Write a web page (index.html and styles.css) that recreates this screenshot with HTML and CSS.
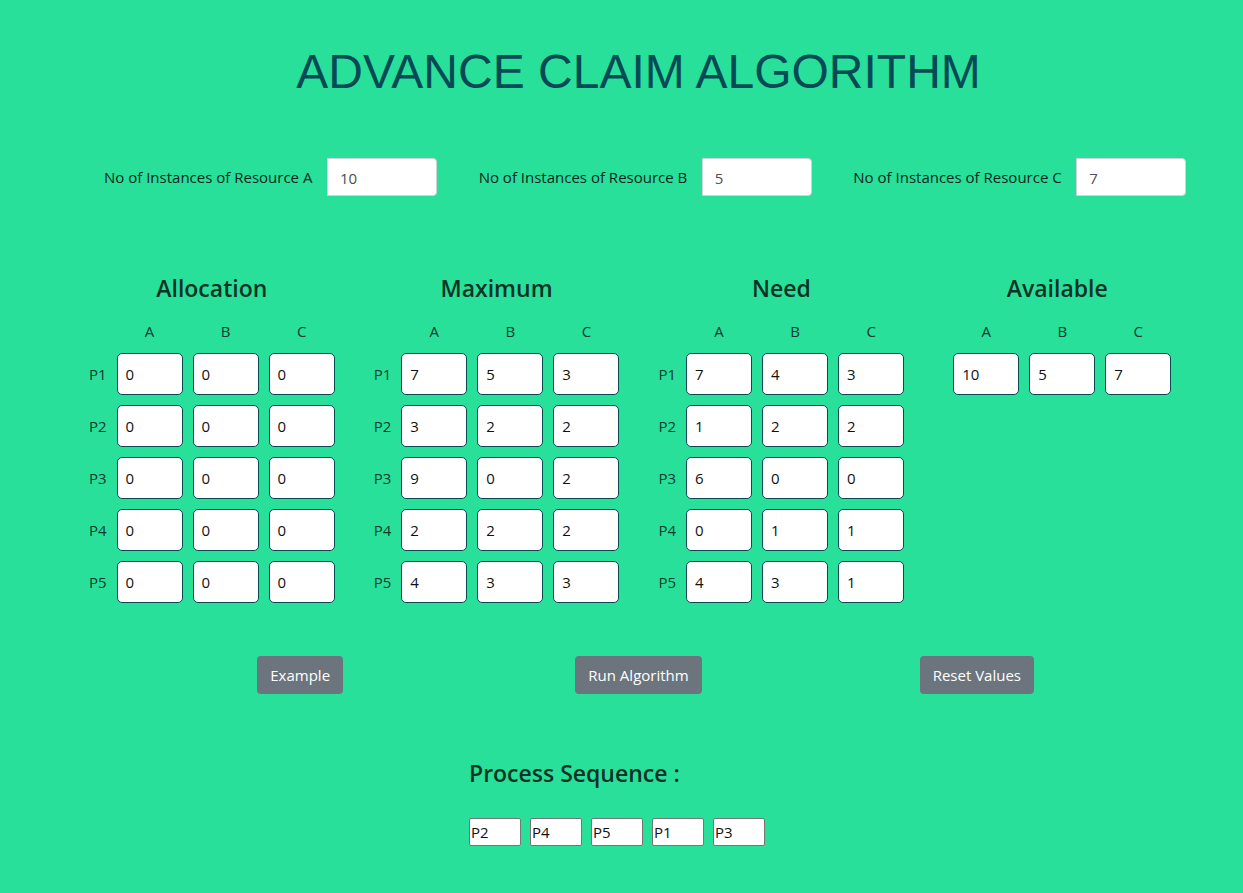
FILE: index.html
```html
<!DOCTYPE html>
<html lang="en">
<head>
<meta charset="utf-8">
<title>Advance Claim Algorithm</title>
<link rel="stylesheet" href="styles.css">
</head>
<body>
<main class="page">
  <h1 class="title">ADVANCE CLAIM ALGORITHM</h1>

  <section class="resources">
    <div class="field"><label class="field-label" for="resA">No of Instances of Resource A</label><input class="field-input" id="resA" type="text" value="10"></div>
    <div class="field"><label class="field-label" for="resB">No of Instances of Resource B</label><input class="field-input" id="resB" type="text" value="5"></div>
    <div class="field"><label class="field-label" for="resC">No of Instances of Resource C</label><input class="field-input" id="resC" type="text" value="7"></div>
  </section>

  <section class="tables" id="tables"></section>

  <div class="actions">
    <button class="btn" type="button">Example</button>
    <button class="btn" type="button">Run Algorithm</button>
    <button class="btn" type="button">Reset Values</button>
  </div>

  <section class="sequence">
    <h2 class="heading">Process Sequence :</h2>
    <div class="steps">
      <input class="step" type="text" aria-label="Step 1" value="P2">
      <input class="step" type="text" aria-label="Step 2" value="P4">
      <input class="step" type="text" aria-label="Step 3" value="P5">
      <input class="step" type="text" aria-label="Step 4" value="P1">
      <input class="step" type="text" aria-label="Step 5" value="P3">
    </div>
  </section>
</main>
<script src="script.js"></script>
</body>
</html>
```
FILE: styles.css
```css
*, *::before, *::after { box-sizing: border-box; }

body {
  margin: 0;
  background: #29e09a;
  color: #0d3b2e;
  font-family: "Segoe UI", "Open Sans", "Noto Sans", sans-serif;
  font-size: 15px;
  line-height: 24px;
}

input, button { font: inherit; }

.page { padding: 43px 35px 47px 69px; }

.title {
  margin: 0;
  color: #064a55;
  font: 400 48px/58px "Liberation Sans", Arial, sans-serif;
  text-align: center;
}

.resources {
  display: grid;
  grid-template-columns: repeat(3, 1fr);
  margin: 57px -8px 0 0;
  padding-left: 23px;
}

.field { display: flex; align-items: center; }

.field-label {
  width: 235px;
  padding: 0 0 0 12px;
  color: #06281c;
  white-space: nowrap;
}

.field-input {
  width: 110px;
  height: 38px;
  padding: 2px 12px 0;
  border: 1px solid #ced4da;
  border-radius: 0 4px 4px 0;
  background: #fff;
  color: #495057;
}

.tables {
  display: grid;
  grid-template-columns: repeat(4, minmax(0, 1fr));
  margin-top: 76px;
}

.matrix { padding-left: 15px; }

.grid { border-collapse: collapse; }

.grid caption, .heading {
  color: #0d3325;
  font-size: 23px;
  font-weight: 600;
  line-height: 32px;
}

.grid caption { padding-bottom: 10px; }

.grid th { padding: 5px; font-weight: 400; text-align: center; }
.grid td { padding: 5px; }

.cell {
  display: block;
  width: 66px;
  height: 42px;
  padding: 0 8px;
  border: 1px solid #064a55;
  border-radius: 5px;
  background: #fff;
  color: #111;
}

.actions {
  display: grid;
  grid-template-columns: repeat(3, 1fr);
  justify-items: center;
  margin-top: 48px;
  padding: 0 62px;
}

.btn {
  height: 38px;
  padding: 0 13px;
  border: 0;
  border-radius: 4px;
  background: #6c757d;
  color: #fff;
}

.sequence { margin-top: 63px; padding-left: 400px; }

.heading { margin: 0; }

.steps { display: flex; gap: 9px; margin-top: 29px; }

.step {
  width: 52px;
  height: 28px;
  padding: 1px;
  border: 1px solid #767676;
  border-radius: 2px;
  background: #fff;
  color: #111;
}
```
FILE: script.js
```js
const matrices = [
  { name: "Allocation", rows: [[0, 0, 0], [0, 0, 0], [0, 0, 0], [0, 0, 0], [0, 0, 0]] },
  { name: "Maximum", rows: [[7, 5, 3], [3, 2, 2], [9, 0, 2], [2, 2, 2], [4, 3, 3]] },
  { name: "Need", rows: [[7, 4, 3], [1, 2, 2], [6, 0, 0], [0, 1, 1], [4, 3, 1]] },
  { name: "Available", rows: [[10, 5, 7]], unlabeled: true }
];

const names = ["A", "B", "C"];

document.getElementById("tables").innerHTML = matrices.map(m => {
  const body = m.rows.map((row, r) => {
    const process = m.unlabeled ? "" : `P${r + 1}`;
    const cells = row.map((v, c) =>
      `<td><input class="cell" type="text" aria-label="${m.name} ${process} ${names[c]}" value="${v}"></td>`).join("");
    return `<tr><th scope="row">${process}</th>${cells}</tr>`;
  }).join("");
  const head = names.map(n => `<th scope="col">${n}</th>`).join("");
  return `<div class="matrix"><table class="grid"><caption>${m.name}</caption><thead><tr><th></th>${head}</tr></thead><tbody>${body}</tbody></table></div>`;
}).join("");
```
